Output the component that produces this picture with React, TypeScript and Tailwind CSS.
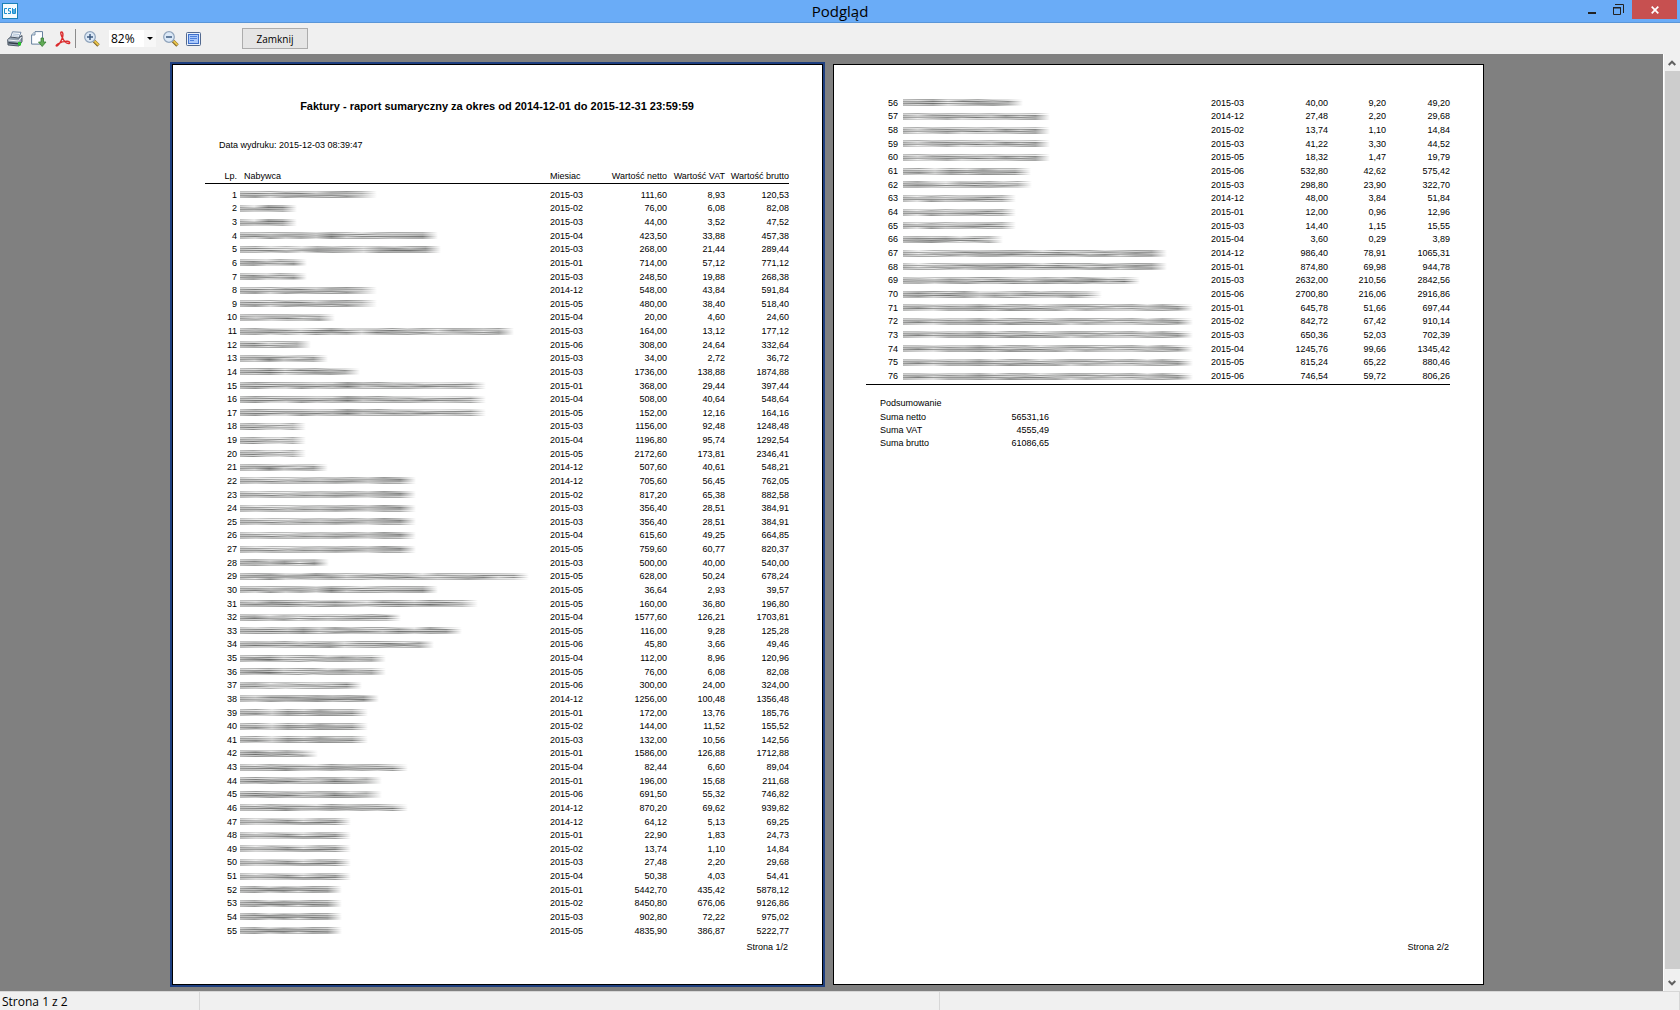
type Row = [width: number, month: string, net: string, vat: string, gross: string];

const FIRST_PAGE: Row[] = [
  [137, "2015-03", "111,60", "8,93", "120,53"],
  [57, "2015-02", "76,00", "6,08", "82,08"],
  [57, "2015-03", "44,00", "3,52", "47,52"],
  [198, "2015-04", "423,50", "33,88", "457,38"],
  [201, "2015-03", "268,00", "21,44", "289,44"],
  [67, "2015-01", "714,00", "57,12", "771,12"],
  [67, "2015-03", "248,50", "19,88", "268,38"],
  [137, "2014-12", "548,00", "43,84", "591,84"],
  [137, "2015-05", "480,00", "38,40", "518,40"],
  [95, "2015-04", "20,00", "4,60", "24,60"],
  [274, "2015-03", "164,00", "13,12", "177,12"],
  [71, "2015-06", "308,00", "24,64", "332,64"],
  [88, "2015-03", "34,00", "2,72", "36,72"],
  [120, "2015-03", "1736,00", "138,88", "1874,88"],
  [246, "2015-01", "368,00", "29,44", "397,44"],
  [246, "2015-04", "508,00", "40,64", "548,64"],
  [246, "2015-05", "152,00", "12,16", "164,16"],
  [66, "2015-03", "1156,00", "92,48", "1248,48"],
  [66, "2015-04", "1196,80", "95,74", "1292,54"],
  [66, "2015-05", "2172,60", "173,81", "2346,41"],
  [88, "2014-12", "507,60", "40,61", "548,21"],
  [176, "2014-12", "705,60", "56,45", "762,05"],
  [176, "2015-02", "817,20", "65,38", "882,58"],
  [176, "2015-03", "356,40", "28,51", "384,91"],
  [176, "2015-03", "356,40", "28,51", "384,91"],
  [176, "2015-04", "615,60", "49,25", "664,85"],
  [176, "2015-05", "759,60", "60,77", "820,37"],
  [89, "2015-03", "500,00", "40,00", "540,00"],
  [289, "2015-05", "628,00", "50,24", "678,24"],
  [198, "2015-05", "36,64", "2,93", "39,57"],
  [238, "2015-05", "160,00", "36,80", "196,80"],
  [161, "2015-04", "1577,60", "126,21", "1703,81"],
  [222, "2015-05", "116,00", "9,28", "125,28"],
  [194, "2015-06", "45,80", "3,66", "49,46"],
  [146, "2015-04", "112,00", "8,96", "120,96"],
  [146, "2015-05", "76,00", "6,08", "82,08"],
  [122, "2015-06", "300,00", "24,00", "324,00"],
  [139, "2014-12", "1256,00", "100,48", "1356,48"],
  [128, "2015-01", "172,00", "13,76", "185,76"],
  [128, "2015-02", "144,00", "11,52", "155,52"],
  [128, "2015-03", "132,00", "10,56", "142,56"],
  [78, "2015-01", "1586,00", "126,88", "1712,88"],
  [168, "2015-04", "82,44", "6,60", "89,04"],
  [142, "2015-01", "196,00", "15,68", "211,68"],
  [142, "2015-06", "691,50", "55,32", "746,82"],
  [168, "2014-12", "870,20", "69,62", "939,82"],
  [111, "2014-12", "64,12", "5,13", "69,25"],
  [111, "2015-01", "22,90", "1,83", "24,73"],
  [111, "2015-02", "13,74", "1,10", "14,84"],
  [111, "2015-03", "27,48", "2,20", "29,68"],
  [111, "2015-04", "50,38", "4,03", "54,41"],
  [102, "2015-01", "5442,70", "435,42", "5878,12"],
  [102, "2015-02", "8450,80", "676,06", "9126,86"],
  [102, "2015-03", "902,80", "72,22", "975,02"],
  [102, "2015-05", "4835,90", "386,87", "5222,77"],
];

const SECOND_PAGE: Row[] = [
  [120, "2015-03", "40,00", "9,20", "49,20"],
  [147, "2014-12", "27,48", "2,20", "29,68"],
  [147, "2015-02", "13,74", "1,10", "14,84"],
  [147, "2015-03", "41,22", "3,30", "44,52"],
  [147, "2015-05", "18,32", "1,47", "19,79"],
  [128, "2015-06", "532,80", "42,62", "575,42"],
  [129, "2015-03", "298,80", "23,90", "322,70"],
  [113, "2014-12", "48,00", "3,84", "51,84"],
  [113, "2015-01", "12,00", "0,96", "12,96"],
  [113, "2015-03", "14,40", "1,15", "15,55"],
  [100, "2015-04", "3,60", "0,29", "3,89"],
  [264, "2014-12", "986,40", "78,91", "1065,31"],
  [264, "2015-01", "874,80", "69,98", "944,78"],
  [237, "2015-03", "2632,00", "210,56", "2842,56"],
  [199, "2015-06", "2700,80", "216,06", "2916,86"],
  [290, "2015-01", "645,78", "51,66", "697,44"],
  [290, "2015-02", "842,72", "67,42", "910,14"],
  [290, "2015-03", "650,36", "52,03", "702,39"],
  [290, "2015-04", "1245,76", "99,66", "1345,42"],
  [290, "2015-05", "815,24", "65,22", "880,46"],
  [290, "2015-06", "746,54", "59,72", "806,26"],
];

export default function App() {
  return (
    <div className="flex min-h-screen flex-col bg-[#f0f0f0] font-['Open_Sans',sans-serif] text-black">
      <TitleBar />
      <Toolbar />
      <div className="flex flex-1">
        <main className="flex flex-1 flex-col bg-[#808080] pt-[10px] pr-[7px] pb-[6px]">
          <div className="mx-auto grid w-full max-w-[1312px] flex-1 grid-cols-2 gap-[10px] font-['Liberation_Sans',Arial,sans-serif] text-[9px] leading-3">
            <section className="flex flex-col border border-black bg-white pr-[33px] pl-8 ring-2 ring-[#1e3f80]">
              <h1 className="mt-[33px] text-center text-[11px] font-bold leading-4">
                Faktury - raport sumaryczny za okres od 2014-12-01 do 2015-12-31 23:59:59
              </h1>
              <p className="mt-[25px] pl-[14px]">Data wydruku: 2015-12-03 08:39:47</p>
              <div className="mt-[19px]">
                <ReportTable rows={FIRST_PAGE} start={1} header />
              </div>
              <p className="mt-[3px] pr-[1px] text-right">Strona 1/2</p>
            </section>

            <section className="flex flex-col border border-black bg-white pr-[33px] pl-8">
              <div className="mt-[31px] border-b border-black pb-[1px]">
                <ReportTable rows={SECOND_PAGE} start={56} />
              </div>
              <Summary />
              <p className="mt-auto mb-[31px] pr-[1px] text-right">Strona 2/2</p>
            </section>
          </div>
        </main>
        <ScrollBar />
      </div>
      <footer className="flex h-[19px] border-t border-[#d7d7d7] text-[12px] leading-5">
        <span className="w-[200px] border-r border-[#d7d7d7] pl-[2px]">Strona 1 z 2</span>
        <span className="w-[740px] border-r border-[#d7d7d7]" />
        <span className="flex-1 border-r border-[#d7d7d7]" />
      </footer>
    </div>
  );
}

function TitleBar() {
  return (
    <header className="relative flex h-[23px] justify-between border-b border-[#5a96d8] bg-[#6aacf7]">
      <svg className="mt-[3px] ml-[2px]" width="16" height="16" viewBox="0 0 16 16" aria-hidden>
        <rect x="0.5" y="0.5" width="15" height="15" fill="#f4fafd" stroke="#1a80b8" />
        <g fill="none" stroke="#1a8fd0" strokeWidth="1">
          <path d="M5 5.5H2.5v5H5" />
          <path d="M9 5.5H6.5V8H8.500v2.500H6" />
          <path d="M10.500 5v5.500h1.500V6v4.500h1.500V5" />
        </g>
      </svg>
      <h2 className="absolute inset-x-0 text-center text-[15px] leading-[22px]">Podgląd</h2>
      <div className="relative flex pr-[3px]">
        <button aria-label="Minimalizuj" className="flex h-[19px] w-6 items-center justify-center">
          <svg width="16" height="16" viewBox="0 0 16 16" aria-hidden>
            <path d="M4 11h8" stroke="#222" strokeWidth="2" />
          </svg>
        </button>
        <button aria-label="Przywróć" className="flex h-[19px] w-7 items-center justify-center">
          <svg width="12" height="12" viewBox="0 0 12 12" fill="none" stroke="#222" aria-hidden>
            <path d="M3 .5h8.500V9" />
            <path d="M1 3.500h7.500v7H1.500V3M1 4h8" />
          </svg>
        </button>
        <button aria-label="Zamknij okno" className="flex h-[19px] w-[45px] items-center justify-center bg-[#c75050]">
          <svg width="8" height="8" viewBox="0 0 8 8" aria-hidden>
            <path d="M.7.7l6.600 6.600M7.300.7L.7 7.300" stroke="#fff" strokeWidth="1.700" />
          </svg>
        </button>
      </div>
    </header>
  );
}

function Toolbar() {
  return (
    <div className="flex h-[31px] items-center bg-[#f0f0f0] pl-[7px]">
      <button aria-label="Drukuj" className="w-6">
        <svg width="16" height="16" viewBox="0 0 16 16" aria-hidden>
          <path d="M5.500 .800l8.500.5-2.500 6.500-8-1z" fill="#fdfeff" stroke="#7087a3" />
          <path d="M6 3l6 .4M5.500 4.800l6 .4" stroke="#8fa9c6" strokeWidth=".8" />
          <path d="M.7 8.500L3.500 6l8 1L15 4.500v6L12 15 1 14z" fill="#93a1b0" stroke="#3f4b59" strokeWidth=".9" />
          <path d="M1.200 9l10.300 1L14.500 6" fill="none" stroke="#f3f6f9" />
          <path d="M1.500 11.800l9.500 1" stroke="#333d49" strokeWidth="1.600" />
          <path d="M11 11h3v3.500h-3z" fill="#28c22c" />
        </svg>
      </button>
      <button aria-label="Eksportuj" className="w-6">
        <svg width="16" height="16" viewBox="0 0 16 16" aria-hidden>
          <path d="M4 .600h7.500v12.500H.600V4z" fill="#fcfdff" stroke="#66809d" />
          <path d="M4 1v3H1" fill="#d5e0ed" stroke="#66809d" strokeWidth=".8" />
          <path d="M10 7h2.500v4H15L11.200 15.500 7.500 11H10z" fill="#62ab55" stroke="#377e37" strokeWidth=".8" />
        </svg>
      </button>
      <button aria-label="Zapisz PDF" className="w-5">
        <svg width="16" height="16" viewBox="0 0 16 16" fill="none" stroke="#db2b2d" aria-hidden>
          <path
            d="M6.500 1C5 1 6 4 7.500 7s4 5.500 6 5.500c2 0 1.500-2-1-2.200-3-.2-7 1-9.500 2.500-2 1.200-2.200 2.200-1.300 2.200 1.700 0 4.800-5.500 5.800-8.500C8.200 4 8.200 1 6.500 1z"
            strokeWidth="1.400"
          />
        </svg>
      </button>
      <span className="h-[19px] w-px bg-[#8c8c8c]" />
      <button aria-label="Powiększ" className="ml-2 w-[25px]">
        <Magnifier plus />
      </button>
      <div className="relative">
        <select
          aria-label="Skala podglądu"
          defaultValue="82%"
          className="block h-[17px] w-[47px] appearance-none bg-white pl-[2px] text-[12px] leading-[17px]"
        >
          <option>82%</option>
        </select>
        <svg
          className="pointer-events-none absolute top-0 right-0 bg-[#f7f7f7]"
          width="12"
          height="17"
          viewBox="0 0 12 17"
          aria-hidden
        >
          <path d="M3 7h6l-3 3z" />
        </svg>
      </div>
      <button aria-label="Pomniejsz" className="ml-[7px] w-[23px]">
        <Magnifier />
      </button>
      <button aria-label="Cała strona">
        <svg width="15" height="14" viewBox="0 0 15 14" aria-hidden>
          <rect x=".5" y=".5" width="14" height="13" rx="1" fill="#eaf1fb" stroke="#52698f" />
          <rect x="2.500" y="2.500" width="10" height="9" fill="#a9c8fa" stroke="#3f70cc" />
          <path d="M4 4.500h7M4 6.500h7M4 8.500h4" stroke="#4d80dc" />
        </svg>
      </button>
      <button className="ml-[41px] h-[21px] w-[66px] border border-[#acacac] bg-[#e5e5e5] text-[10px] leading-[18px]">
        Zamknij
      </button>
    </div>
  );
}

function Magnifier({ plus = false }: { plus?: boolean }) {
  return (
    <svg width="16" height="16" viewBox="0 0 16 16" aria-hidden>
      <path d="M10 10l4.500 4.500" stroke="#7c6426" strokeWidth="3.400" />
      <path d="M10.500 10l4 4" stroke="#e9c34a" strokeWidth="2" />
      <circle cx="6" cy="6" r="5.300" fill="#dce9f7" stroke="#8fa3bb" strokeWidth="1.200" />
      <path d={plus ? "M3 6h6M6 3v6" : "M3 6h6"} stroke="#3c5a80" strokeWidth="1.500" />
    </svg>
  );
}

function ReportTable({ rows, start, header = false }: { rows: Row[]; start: number; header?: boolean }) {
  return (
    <table className={`w-full table-fixed border-collapse ${header ? "h-[768px]" : "h-[287px]"}`}>
      <colgroup>
        <col className="w-8" />
        <col />
        <col className="w-[59px]" />
        <col className="w-[58px]" />
        <col className="w-[58px]" />
        <col className="w-16" />
      </colgroup>
      {header && (
        <thead className="whitespace-nowrap text-right">
          <tr className="h-[13px] border-b border-black align-top">
            <th className="p-0 font-normal">Lp.</th>
            <th className="p-0 pl-[7px] text-left font-normal">Nabywca</th>
            <th className="p-0 text-left font-normal">Miesiac</th>
            <th className="p-0 font-normal">Wartość netto</th>
            <th className="p-0 font-normal">Wartość VAT</th>
            <th className="p-0 font-normal">Wartość brutto</th>
          </tr>
          <tr className="h-[5px]" aria-hidden />
        </thead>
      )}
      <tbody className="text-right">
        {rows.map(([width, month, net, vat, gross], i) => (
          <tr key={start + i}>
            <td className="p-0">{start + i}</td>
            <td className={header ? "p-0 pl-[3px]" : "p-0 pl-[5px]"}>
              <Smear width={width} />
            </td>
            <td className="p-0 text-left">{month}</td>
            <td className="p-0">{net}</td>
            <td className="p-0">{vat}</td>
            <td className="p-0">{gross}</td>
          </tr>
        ))}
      </tbody>
    </table>
  );
}

// grey level of each one-pixel line in a blurred-out name
const STREAKS = [0.28, 0.2, 0.42, 0.27, 0.46, 0.28, 0.32];

function noise(seed: number) {
  const n = Math.sin(seed * 127.1) * 43758.5453;
  return n - Math.floor(n) - 0.5;
}

function Smear({ width }: { width: number }) {
  const steps = Math.ceil(width / 16);
  return (
    <svg className="block" width={width} height="7" aria-hidden>
      {STREAKS.map((base, line) => {
        const id = `smear-${width}-${line}`;
        return (
          <g key={line}>
            <linearGradient id={id}>
              {Array.from({ length: steps + 1 }, (_, s) => {
                const shift = noise(width + s * 3.7 + line * 11.3) * 0.3 + noise(width + s * 5.1) * 0.14;
                const alpha = s === steps ? 0 : s === 0 ? base : Math.max(0.08, base + shift);
                return <stop key={s} offset={s / steps} stopColor="#202220" stopOpacity={alpha} />;
              })}
            </linearGradient>
            <rect y={line} width={width} height="1" fill={`url(#${id})`} />
          </g>
        );
      })}
    </svg>
  );
}

function Summary() {
  const sums = [
    ["Suma netto", "56531,16"],
    ["Suma VAT", "4555,49"],
    ["Suma brutto", "61086,65"],
  ];
  return (
    <table className="mt-3 ml-[14px] w-[169px] border-collapse leading-[13px]">
      <caption className="pb-[1px] text-left">Podsumowanie</caption>
      <tbody>
        {sums.map(([label, value]) => (
          <tr key={label}>
            <th className="p-0 text-left font-normal">{label}</th>
            <td className="p-0 text-right">{value}</td>
          </tr>
        ))}
      </tbody>
    </table>
  );
}

function ScrollBar() {
  return (
    <div className="flex w-[17px] flex-col items-center border-l border-white bg-[#f0f0f0]">
      <button aria-label="Przewiń w górę" className="flex h-[17px] items-center">
        <svg width="8" height="6" viewBox="0 0 8 6" fill="none" stroke="#606060" strokeWidth="2" aria-hidden>
          <path d="M.7 5L4 1.700 7.300 5" />
        </svg>
      </button>
      <div className="mb-[5px] w-[15px] flex-1 bg-[#cdcdcd]" />
      <button aria-label="Przewiń w dół" className="flex h-[17px] items-center">
        <svg width="8" height="6" viewBox="0 0 8 6" fill="none" stroke="#606060" strokeWidth="2" aria-hidden>
          <path d="M.7 1L4 4.300 7.300 1" />
        </svg>
      </button>
    </div>
  );
}
